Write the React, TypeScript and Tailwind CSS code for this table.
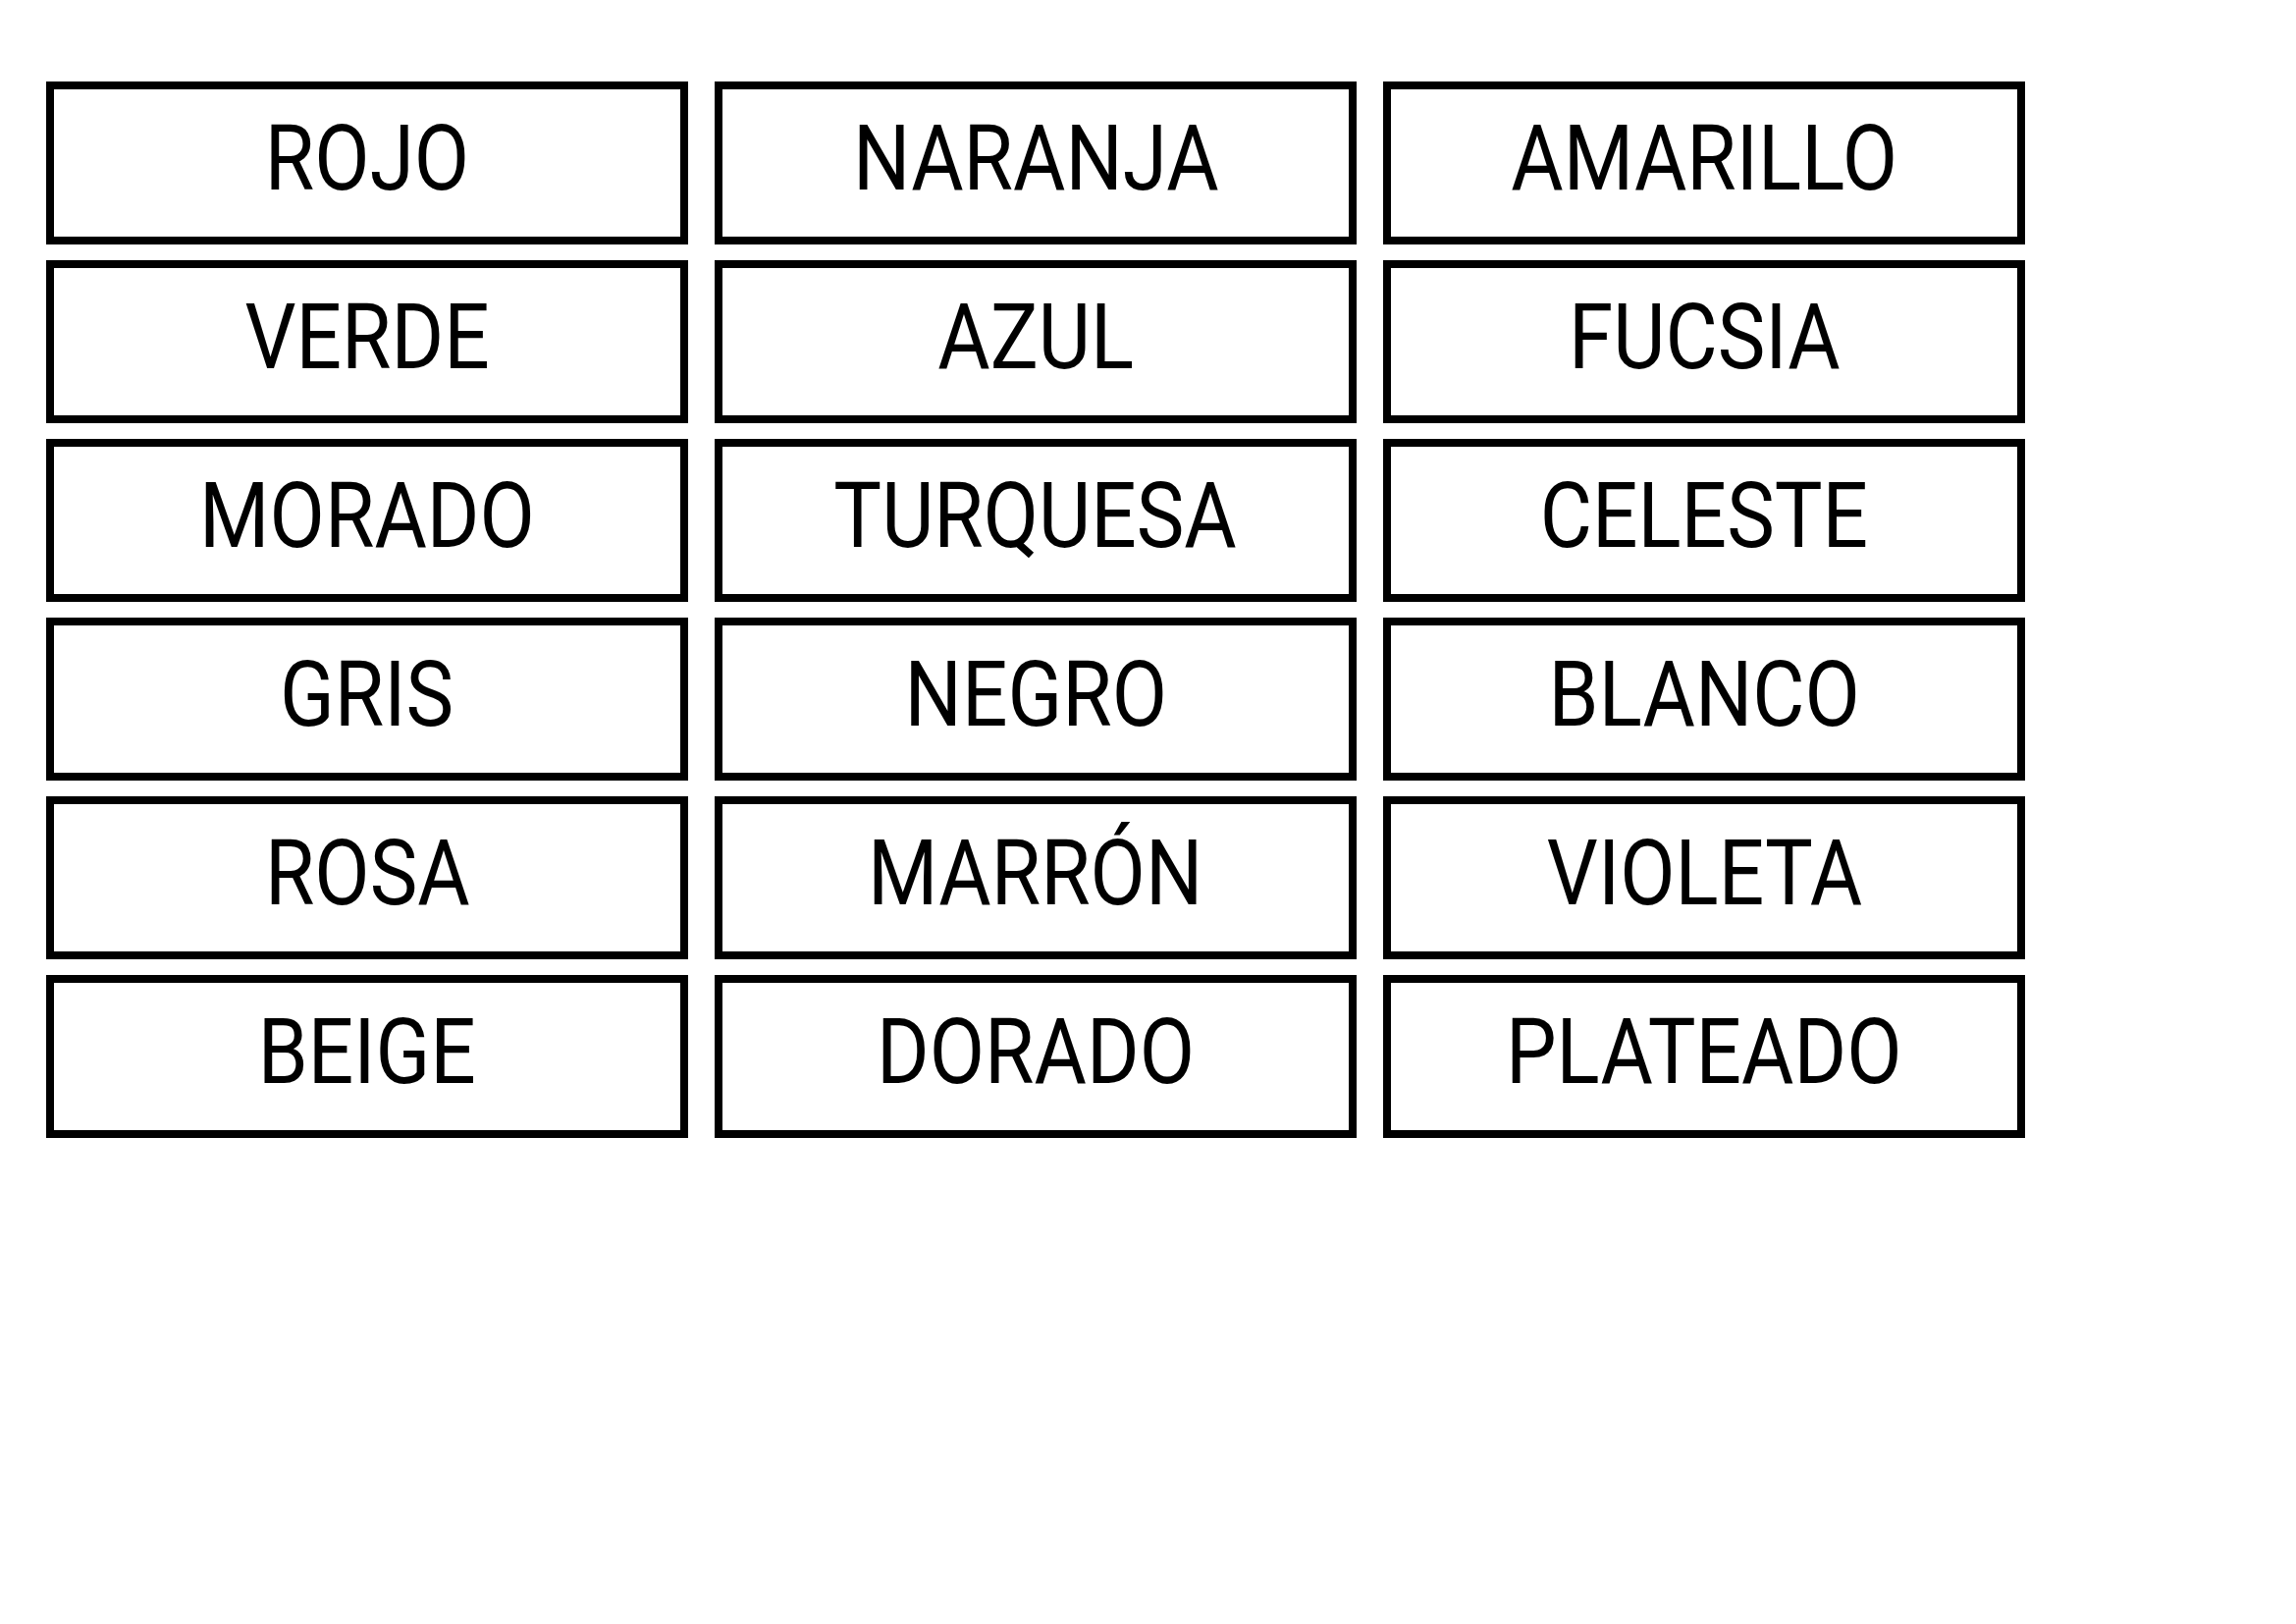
import React from "react";

const words = [
  "ROJO", "NARANJA", "AMARILLO",
  "VERDE", "AZUL", "FUCSIA",
  "MORADO", "TURQUESA", "CELESTE",
  "GRIS", "NEGRO", "BLANCO",
  "ROSA", "MARRÓN", "VIOLETA",
  "BEIGE", "DORADO", "PLATEADO",
];

export default function App() {
  return (
    <div className="w-[2339px] h-[1654px] bg-white pl-[47px] pt-[83px]">
      <div className="grid grid-cols-[654px_654px_654px] auto-rows-[166px] gap-x-[27px] gap-y-[16px]">
        {words.map((w) => (
          <div
            key={w}
            className="border-[8px] border-black flex items-center justify-center pb-[8px]"
          >
            <span className="inline-block scale-x-[0.89] text-[92px] leading-none text-black font-['Roboto',sans-serif] font-normal whitespace-nowrap">
              {w}
            </span>
          </div>
        ))}
      </div>
    </div>
  );
}
